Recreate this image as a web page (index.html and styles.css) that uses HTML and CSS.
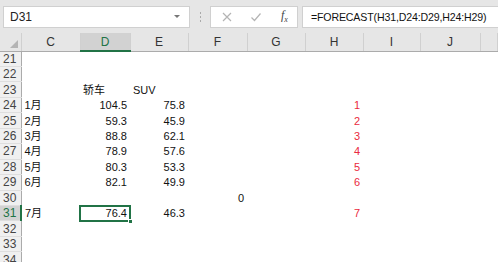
FILE: index.html
```html
<!DOCTYPE html>
<html lang="zh-CN">
<head>
    <meta charset="UTF-8">
    <title>FORECAST</title>
    <link rel="stylesheet" href="styles.css">
</head>
<body>

    <div class="toolbar">
        <div class="namebox"><span>D31</span><span class="arrow"></span></div>
        <div class="grip"><i></i><i></i><i></i></div>
        <div class="fxbox">
            <svg class="btn" width="12" height="12" viewBox="0 0 12 12"><path d="M2 2L10 10M10 2L2 10" stroke="#b4b4b4" stroke-width="1.2" fill="none"/></svg>
            <svg class="btn" width="12" height="12" viewBox="0 0 12 12"><path d="M1.5 6.5L4.5 9.5L10.5 2.5" stroke="#b4b4b4" stroke-width="1.2" fill="none"/></svg>
            <span class="fx">f<sub>x</sub></span>
        </div>
        <div class="formula">=FORECAST(H31,D24:D29,H24:H29)</div>
    </div>

    <table class="sheet">
        <colgroup>
            <col class="c-hdr"><col class="c-w59"><col class="c-w50"><col class="c-w58"><col class="c-w59"><col class="c-w58"><col class="c-w58"><col class="c-w57"><col class="c-w60"><col>
        </colgroup>
        <thead>
            <tr>
                <th class="corner"><span class="tri"></span></th>
                <th>C</th><th class="sel">D</th><th>E</th><th>F</th><th>G</th><th>H</th><th>I</th><th>J</th><th></th>
            </tr>
        </thead>
        <tbody>
            <tr><th>21</th><td></td><td></td><td></td><td></td><td></td><td></td><td></td><td></td><td></td></tr>
            <tr><th>22</th><td></td><td></td><td></td><td></td><td></td><td></td><td></td><td></td><td></td></tr>
            <tr><th>23</th><td></td><td>轿车</td><td>SUV</td><td></td><td></td><td></td><td></td><td></td><td></td></tr>
            <tr><th>24</th><td>1月</td><td class="num">104.5</td><td class="num">75.8</td><td></td><td></td><td class="num red">1</td><td></td><td></td><td></td></tr>
            <tr><th>25</th><td>2月</td><td class="num">59.3</td><td class="num">45.9</td><td></td><td></td><td class="num red">2</td><td></td><td></td><td></td></tr>
            <tr><th>26</th><td>3月</td><td class="num">88.8</td><td class="num">62.1</td><td></td><td></td><td class="num red">3</td><td></td><td></td><td></td></tr>
            <tr><th>27</th><td>4月</td><td class="num">78.9</td><td class="num">57.6</td><td></td><td></td><td class="num red">4</td><td></td><td></td><td></td></tr>
            <tr><th>28</th><td>5月</td><td class="num">80.3</td><td class="num">53.3</td><td></td><td></td><td class="num red">5</td><td></td><td></td><td></td></tr>
            <tr><th>29</th><td>6月</td><td class="num">82.1</td><td class="num">49.9</td><td></td><td></td><td class="num red">6</td><td></td><td></td><td></td></tr>
            <tr><th>30</th><td></td><td></td><td></td><td class="num">0</td><td></td><td></td><td></td><td></td><td></td></tr>
            <tr><th class="sel">31</th><td>7月</td><td class="num active">76.4</td><td class="num">46.3</td><td></td><td></td><td class="num red">7</td><td></td><td></td><td></td></tr>
            <tr><th>32</th><td></td><td></td><td></td><td></td><td></td><td></td><td></td><td></td><td></td></tr>
            <tr><th>33</th><td></td><td></td><td></td><td></td><td></td><td></td><td></td><td></td><td></td></tr>
            <tr><th>34</th><td></td><td></td><td></td><td></td><td></td><td></td><td></td><td></td><td></td></tr>
        </tbody>
    </table>

</body>
</html>
```

FILE: styles.css
```css
body { margin: 0; background: #fff; font-family: "Liberation Sans", "Noto Sans CJK SC", sans-serif; overflow: hidden; }

.toolbar { display: flex; align-items: center; height: 33px; padding-left: 3px; background: #e6e6e6; box-sizing: border-box; }
.namebox { display: flex; align-items: center; justify-content: space-between; width: 187px; height: 22px; padding: 0 9px 0 6px; background: #fff; border: 1px solid #d0d0d0; box-sizing: border-box; font-size: 12px; color: #222; }
.arrow { width: 0; height: 0; border-left: 3px solid transparent; border-right: 3px solid transparent; border-top: 3px solid #777; }
.grip { display: flex; flex-direction: column; gap: 2px; width: 20px; align-items: center; }
.grip i { width: 1px; height: 2px; background: #aaa; }
.fxbox { display: flex; align-items: center; width: 88px; height: 22px; padding: 0 8px 0 10px; background: #fff; border: 1px solid #d0d0d0; box-sizing: border-box; gap: 17px; }
.fx { font-family: "Liberation Serif", serif; font-style: italic; font-size: 12px; color: #444; margin-left: 2px; }
.fx sub { font-size: 8px; }
.formula { flex: 1; height: 22px; margin-left: 4px; padding-left: 8px; background: #fff; border: 1px solid #d0d0d0; border-right: none; box-sizing: border-box; font-size: 10.6px; letter-spacing: -0.15px; line-height: 20px; color: #111; }

.sheet { width: 100%; table-layout: fixed; border-collapse: collapse; }
.c-hdr { width: 21px; }
.c-w59 { width: 59px; }
.c-w50 { width: 50px; }
.c-w58 { width: 58px; }
.c-w57 { width: 57px; }
.c-w60 { width: 60px; }

thead th { height: 17px; padding: 0; background: #e6e6e6; border-right: 1px solid #d0d0d0; border-bottom: 1px solid #ababab; font-weight: normal; font-size: 12px; color: #333; }
thead th.sel { background: #d2d2d2; color: #217346; border-bottom: 2px solid #217346; }
.corner { position: relative; }
.tri { position: absolute; right: 3px; bottom: 3px; width: 0; height: 0; border-left: 8px solid transparent; border-bottom: 8px solid #b4b4b4; }

tbody tr { height: 15.46px; }
tbody th { padding: 0 0 0 3px; background: #f0f0f0; border-right: 1px solid #ababab; border-bottom: 1px solid #dedede; font-weight: normal; font-size: 12px; color: #444; text-align: left; }
tbody th.sel { background: #d2d2d2; border-right: 2px solid #217346; color: #217346; }
td { padding: 0 3px; font-size: 11px; color: #111; white-space: nowrap; line-height: 14px; }
td.num { text-align: right; }
td.red { color: #ea2a40; }
td.active { position: relative; outline: 2px solid #217346; outline-offset: -1px; }
td.active::after { content: ""; position: absolute; right: -3px; bottom: -3px; width: 5px; height: 5px; background: #217346; border: 1px solid #fff; box-sizing: border-box; }
```
